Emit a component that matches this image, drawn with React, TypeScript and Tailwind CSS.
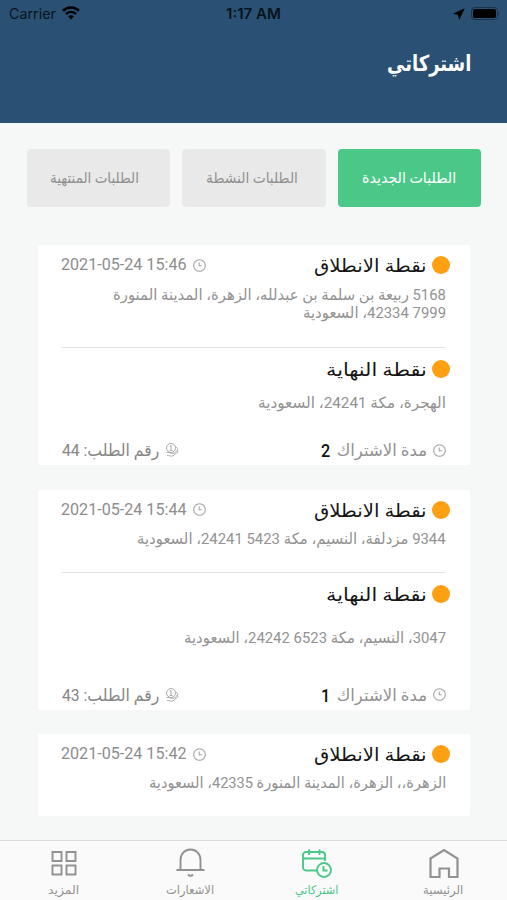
import { useLayoutEffect, useRef, useState } from 'react';
import type { ReactNode } from 'react';

// Text squeezed or stretched to fill the width given by its class.
function Fit({ className, children, ltr }: { className: string; children: ReactNode; ltr?: boolean }) {
  const outer = useRef<HTMLDivElement>(null);
  const inner = useRef<HTMLSpanElement>(null);
  const [scale, setScale] = useState(1);
  useLayoutEffect(() => {
    if (outer.current && inner.current && inner.current.offsetWidth) {
      setScale(outer.current.offsetWidth / inner.current.offsetWidth);
    }
  }, []);
  return (
    <div ref={outer} dir={ltr ? 'ltr' : 'rtl'} className={`shrink-0 whitespace-nowrap ${className}`}>
      <span
        ref={inner}
        className={`inline-block ${ltr ? 'origin-left' : 'origin-right'}`}
        style={{ transform: `scaleX(${scale})` }}
      >
        {children}
      </span>
    </div>
  );
}

function Clock() {
  return (
    <svg className="size-[13px] shrink-0" viewBox="0 0 13 13" fill="none" stroke="#a3a3a3" strokeWidth="1.1">
      <circle cx="6.5" cy="6.5" r="5.8" />
      <path d="M6.200 3.400V6.800h2.600" />
    </svg>
  );
}

function Coin() {
  return (
    <svg className="size-[14px] shrink-0" viewBox="0 0 14 14" fill="none" stroke="#a3a3a3" strokeWidth="0.9">
      <circle cx="6" cy="5" r="4.5" />
      <path d="M6 2.300v5.200M4.800 3.300 6 2.300M4.600 7.500h2.800" />
      <path d="M1.500 9.500c2-.8 3.500.8 5 .8h2.500M2 12.300c2 .2 4 1.200 6 .6l5-4.100c.6-.8-.4-1.400-1.200-.9L9 10.300M10.500 4c2 .4 2.700 2 1.700 3.700" />
    </svg>
  );
}

function Point({ title, width }: { title: string; width: string }) {
  return (
    <div className="flex h-10 items-center">
      <span className="size-[18px] shrink-0 rounded-full bg-[#ff9f12]" />
      <Fit className={`ms-[5px] h-10 text-[18.5px] leading-[42px] text-[#151515] ${width}`}>{title}</Fit>
    </div>
  );
}

function PickUp({ date }: { date: string }) {
  return (
    <div className="flex items-center justify-between">
      <Point title="نقطة الانطلاق" width="w-[113px]" />
      <div className="flex items-center gap-[6px] pe-[3px]">
        <Clock />
        <Fit ltr className="h-5 w-[126px] text-[16.5px] leading-[20px] text-[#8d8d8d]">{date}</Fit>
      </div>
    </div>
  );
}

function Address({ text, width }: { text: string; width: string }) {
  return (
    <Fit className={`ms-[4px] h-[18px] text-[15.5px] leading-[18px] text-[#929292] ${width}`}>{text}</Fit>
  );
}

function Footer({ months, order }: { months: string; order: string }) {
  return (
    <div className="mt-auto flex h-[30px] items-center justify-between ps-[4px] pe-[4px]">
      <div className="flex items-center">
        <Clock />
        <Fit className="ms-[6px] h-6 w-[90px] text-[16.5px] leading-[25px] text-[#929292]">مدة الاشتراك</Fit>
        <Fit className="ms-[7px] h-6 w-[9px] text-[18px] leading-[25px] font-medium text-[#111]">{months}</Fit>
      </div>
      <div className="flex items-center">
        <Coin />
        <Fit className="ms-[6px] h-6 w-[97px] text-[16.5px] leading-[25px] text-[#858585]">{`رقم الطلب: ${order}`}</Fit>
      </div>
    </div>
  );
}

const card = 'flex flex-col rounded-[2px] bg-white ps-5 pe-5';
const divider = 'ms-[4px] me-[4px] h-px shrink-0 bg-[#e2e2e2]';

function Tab({ label, active, width }: { label: string; active?: boolean; width: string }) {
  return (
    <div
      className={`flex h-[58px] flex-1 items-center justify-center rounded-[4px] ${
        active ? 'bg-[#4bc888] text-white' : 'bg-[#e9e9e9] text-[#909090]'
      }`}
    >
      <Fit className={`h-6 text-[15px] leading-[24px] ${width}`}>{label}</Fit>
    </div>
  );
}

function NavItem({ label, width, color, children }: { label: string; width: string; color: string; children: ReactNode }) {
  return (
    <div className={`flex flex-1 flex-col items-center pt-[7px] ${color}`}>
      <svg className="size-[32px]" viewBox="0 0 32 32" fill="none" stroke="currentColor" strokeWidth="1.9">
        {children}
      </svg>
      <Fit className={`mt-px h-[18px] text-[12px] leading-[18px] ${width}`}>{label}</Fit>
    </div>
  );
}

export default function App() {
  return (
    <div
      dir="rtl"
      className="flex h-[900px] w-[507px] flex-col overflow-hidden bg-[#f6f8f8] font-['Roboto','DejaVu_Sans',sans-serif]"
    >
      <header className="flex h-[123px] shrink-0 flex-col bg-[#2a5173]">
        <div
          dir="ltr"
          className="grid h-7 grid-cols-3 items-center px-[9px] font-['Inter','Liberation_Sans',sans-serif] text-[14px] text-[#08131d]"
        >
          <div className="flex items-center gap-[6px]">
            <Fit ltr className="h-5 w-[47px] leading-[20px]">Carrier</Fit>
            <svg className="-mt-[2px] h-[14px] w-[18px]" viewBox="0 0 18 14" fill="none" stroke="#000" strokeWidth="2.6">
              <path d="M1 4.700C5.500.4 12.500.4 17 4.700M4 8c3-2.700 7-2.700 10 0" />
              <path d="M9 13.500 6.200 10.500q2.800-2.400 5.600 0z" fill="#000" stroke="none" />
            </svg>
          </div>
          <div className="flex justify-center">
            <Fit ltr className="h-5 w-[55px] leading-[20px] font-semibold">1:17 AM</Fit>
          </div>
          <div className="flex items-center justify-end gap-[6px]">
            <svg className="-mt-px h-[12px] w-[12px]" viewBox="0 0 12 12" fill="#000">
              <path d="M11.800.2 0 5.800l5 1.200 1.200 5z" />
            </svg>
            <svg className="-mt-[2px] -mr-[2px] h-[13px] w-[29px]" viewBox="0 0 29 13">
              <rect x=".5" y=".5" width="26" height="12" rx="3" fill="none" stroke="#1a3347" />
              <rect x="2" y="2" width="23" height="9" rx="1.800" fill="#000" />
              <path d="M27.500 4.500q2 2 0 4z" fill="#1a3347" />
            </svg>
          </div>
        </div>
        <h1 className="mt-[15px] ps-[36px] font-bold text-white">
          <Fit className="h-10 w-[84px] text-[22px] leading-[41px]">اشتركاتي</Fit>
        </h1>
      </header>

      <div className="mt-[26px] flex shrink-0 gap-3 ps-[26px] pe-[27px]">
        <Tab active label="الطلبات الجديدة" width="w-[94px]" />
        <Tab label="الطلبات النشطة" width="w-[92px] ms-[5px]" />
        <Tab label="الطلبات المنتهية" width="w-[89px] ms-[9px]" />
      </div>

      <main className="mt-[38px] flex min-h-0 flex-1 flex-col gap-[24.500px] ps-[37px] pe-[38px]">
        <section className={`h-[220px] shrink-0 ${card}`}>
          <PickUp date="2021-05-24 15:46" />
          <div className="h-[62px] pt-px">
            <Address text="5168 ربيعة بن سلمة بن عبدلله، الزهرة، المدينة المنورة" width="w-[333px]" />
            <Address text="7999 42334، السعودية" width="w-[143px]" />
          </div>
          <div className={divider} />
          <div className="mt-px">
            <Point title="نقطة النهاية" width="w-[101px]" />
          </div>
          <div className="mt-[5px]">
            <Address text="الهجرة، مكة 24241، السعودية" width="w-[188px]" />
          </div>
          <Footer months="2" order="44" />
        </section>

        <section className={`h-[220px] shrink-0 ${card}`}>
          <PickUp date="2021-05-24 15:44" />
          <div className="h-[42px]">
            <Address text="9344 مزدلفة، النسيم، مكة 5423 24241، السعودية" width="w-[309px]" />
          </div>
          <div className={divider} />
          <div className="mt-px">
            <Point title="نقطة النهاية" width="w-[101px]" />
          </div>
          <div className="mt-[15px]">
            <Address text="3047، النسيم، مكة 6523 24242، السعودية" width="w-[262px]" />
          </div>
          <Footer months="1" order="43" />
        </section>

        <section className={`h-[82px] shrink-0 ${card}`}>
          <PickUp date="2021-05-24 15:42" />
          <Address text="الزهرة،، الزهرة، المدينة المنورة 42335، السعودية" width="w-[297px]" />
        </section>
      </main>

      <nav className="flex h-[60px] shrink-0 border-t border-[#d9dada] bg-[#fafafa]">
        <NavItem label="الرئيسية" width="w-[40px]" color="text-[#929292]">
          <path d="M2.500 10.500 16 2l13.500 8.500V29H21v-8.500h-9.500v8.500h-9z" strokeWidth="2.200" />
        </NavItem>
        <NavItem label="اشتركاتي" width="w-[43px]" color="text-[#4bc888]">
          <path d="M17 22.500H5a3 3 0 0 1-3-3V7a3 3 0 0 1 3-3h16a3 3 0 0 1 3 3v6M2 10.500h22M8 1.500V7M18.500 1.500V7" />
          <circle cx="23" cy="22" r="7" />
          <path d="M22.500 18v4.500h4" />
        </NavItem>
        <NavItem label="الاشعارات" width="w-[48px]" color="text-[#929292]">
          <path d="M6.500 22V12C6.500 5.500 11 1.500 16.500 1.500S26.500 5.500 26.500 12v10M2.500 22h28M14 26.500q2.500 2.800 5 0" />
        </NavItem>
        <NavItem label="المزيد" width="w-[31px]" color="text-[#929292]">
          <path d="M5.500 4h9v9h-9zM19.500 4h9v9h-9zM5.500 17.500h9v9h-9zM19.500 17.500h9v9h-9z" />
        </NavItem>
      </nav>
    </div>
  );
}
